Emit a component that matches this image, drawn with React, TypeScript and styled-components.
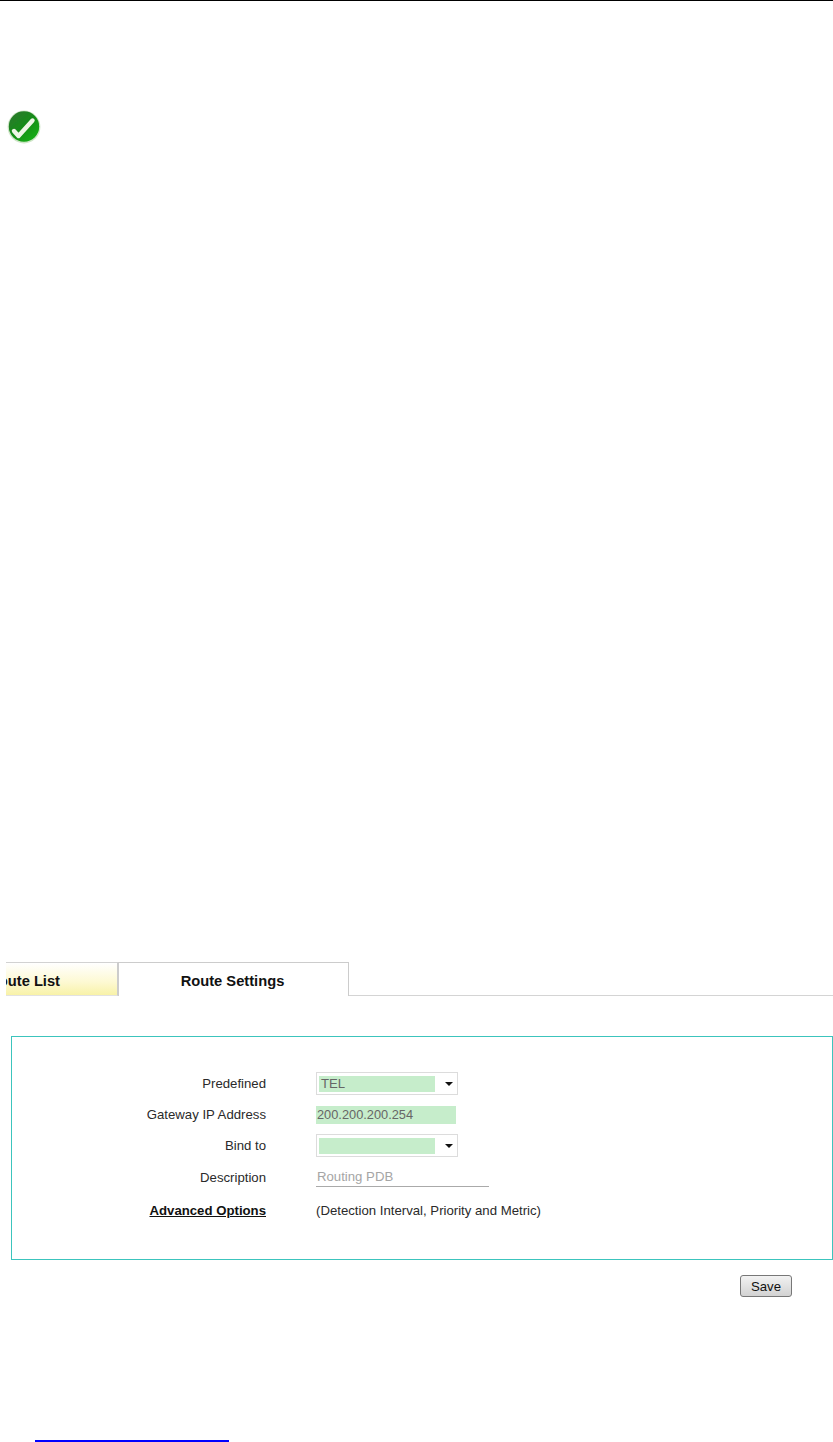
import React from 'react';
import styled, { createGlobalStyle } from 'styled-components';

const GlobalStyle = createGlobalStyle`
  html, body {
    margin: 0;
    padding: 0;
    background: #fff;
  }
  body {
    font-family: "Liberation Sans", Arial, sans-serif;
    font-size: 13.2px;
    color: #2a2a2a;
  }
`;

const CheckIcon = () => (
  <svg width="36" height="34" viewBox="0 0 36 34">
    <defs>
      <linearGradient id="ball" x1="15%" y1="5%" x2="85%" y2="90%">
        <stop offset="0%" stopColor="#2a7a2c" />
        <stop offset="50%" stopColor="#168c18" />
        <stop offset="100%" stopColor="#12ad12" />
      </linearGradient>
      <filter id="soft" x="-10%" y="-10%" width="120%" height="120%">
        <feGaussianBlur stdDeviation="0.7" />
      </filter>
    </defs>
    <g filter="url(#soft)">
      <circle cx="18" cy="17" r="16.4" fill="#cfe6c8" />
      <circle cx="18" cy="16.5" r="15.2" fill="url(#ball)" />
      <path
        d="M8 21 L12.5 26 L26.5 10.5"
        fill="none"
        stroke="#eef6e6"
        strokeWidth="4.4"
        strokeLinecap="round"
        strokeLinejoin="round"
      />
    </g>
  </svg>
);

const Arrow = () => (
  <svg width="8" height="4" viewBox="0 0 8 4">
    <path d="M0 0 H8 L4 4 Z" fill="#111" />
  </svg>
);

const Page = styled.div`
  width: 833px;
  height: 1442px;
  display: flex;
  flex-direction: column;
  overflow: hidden;
`;

const TopRule = styled.div`
  height: 1px;
  background: #000;
  flex: none;
`;

const IconRow = styled.div`
  display: flex;
  padding: 109px 0 0 6px;
  height: 34px;
  flex: none;
`;

const TabBar = styled.div`
  display: flex;
  height: 34px;
  margin: 818px 0 0 6px;
  flex: none;
`;

const ListTab = styled.div`
  width: 112px;
  box-sizing: border-box;
  height: 34px;
  background: linear-gradient(#fff 0%, #fdf9d2 60%, #f8f2a8 100%);
  border-top: 1px solid #d2d2d2;
  border-right: 1px solid #ccc;
  border-bottom: 1px solid #e2e2e2;
  font-size: 14.7px;
  font-weight: 700;
  color: #111;
  overflow: hidden;
  display: flex;
  justify-content: flex-end;
  align-items: center;
  padding: 4px 57px 0 0;
  white-space: nowrap;
`;

const ActiveTab = styled.div`
  width: 231px;
  box-sizing: border-box;
  height: 34px;
  border: 1px solid #ccc;
  border-bottom: none;
  font-size: 14.7px;
  font-weight: 700;
  color: #111;
  display: flex;
  justify-content: center;
  align-items: center;
  padding: 3px 2px 0 0;
`;

const TabRest = styled.div`
  flex: 1;
  border-bottom: 1px solid #d4d4d4;
`;

const Panel = styled.div`
  margin: 40px 0 0 11px;
  width: 822px;
  height: 224px;
  box-sizing: border-box;
  border: 1px solid #3cc4bd;
  padding-top: 31px;
  display: grid;
  grid-template-columns: 254px 1fr;
  grid-template-rows: 31px 31px 31px 32px 34px;
  column-gap: 50px;
  align-items: center;
  flex: none;
`;

const Label = styled.div<{ $link?: boolean }>`
  text-align: right;
  font-weight: ${({ $link }) => ($link ? 700 : 400)};
  text-decoration: ${({ $link }) => ($link ? 'underline' : 'none')};
  color: ${({ $link }) => ($link ? '#111' : '#2a2a2a')};
`;

const Field = styled.div`
  display: flex;
  align-items: center;
`;

const Select = styled.div`
  width: 142px;
  height: 23px;
  box-sizing: border-box;
  border: 1px solid #dcdcdc;
  display: flex;
  align-items: center;
  padding-left: 2px;
`;

const SelectValue = styled.div`
  width: 116px;
  height: 16px;
  line-height: 16px;
  padding-left: 2px;
  box-sizing: border-box;
  background: #c6edcb;
  color: #666;
`;

const ArrowSlot = styled.span`
  display: flex;
  margin-left: 10px;
`;

const FilledInput = styled.div`
  width: 140px;
  height: 18px;
  line-height: 18px;
  background: #c6edcb;
  color: #666;
  font-size: 12.8px;
  box-sizing: border-box;
  padding-left: 1px;
`;

const LineInput = styled.div`
  width: 173px;
  height: 20px;
  line-height: 19px;
  border-bottom: 1px solid #aaa;
  color: #a5a5a5;
  padding-left: 1px;
  box-sizing: border-box;
`;

const Hint = styled.div`
  color: #2a2a2a;
`;

const Actions = styled.div`
  display: flex;
  justify-content: flex-end;
  padding: 15px 41px 0 0;
  flex: none;
`;

const SaveButton = styled.button`
  width: 52px;
  height: 22px;
  padding: 0;
  border: 1px solid #777;
  border-radius: 3px;
  background: linear-gradient(#f2f2f2, #d2d2d2);
  font-family: inherit;
  font-size: 13.2px;
  color: #111;
`;

const FootLink = styled.div`
  width: 194px;
  height: 2px;
  background: #0000ff;
  margin: 143px 0 0 35px;
  flex: none;
`;

const App = () => (
  <Page>
    <GlobalStyle />
    <TopRule />
    <IconRow>
      <CheckIcon />
    </IconRow>
    <TabBar>
      <ListTab>Route List</ListTab>
      <ActiveTab>Route Settings</ActiveTab>
      <TabRest />
    </TabBar>
    <Panel>
      <Label>Predefined</Label>
      <Field>
        <Select>
          <SelectValue>TEL</SelectValue>
          <ArrowSlot>
            <Arrow />
          </ArrowSlot>
        </Select>
      </Field>
      <Label>Gateway IP Address</Label>
      <Field>
        <FilledInput>200.200.200.254</FilledInput>
      </Field>
      <Label>Bind to</Label>
      <Field>
        <Select>
          <SelectValue />
          <ArrowSlot>
            <Arrow />
          </ArrowSlot>
        </Select>
      </Field>
      <Label>Description</Label>
      <Field>
        <LineInput>Routing PDB</LineInput>
      </Field>
      <Label $link>Advanced Options</Label>
      <Field>
        <Hint>(Detection Interval, Priority and Metric)</Hint>
      </Field>
    </Panel>
    <Actions>
      <SaveButton>Save</SaveButton>
    </Actions>
    <FootLink />
  </Page>
);

export default App;
